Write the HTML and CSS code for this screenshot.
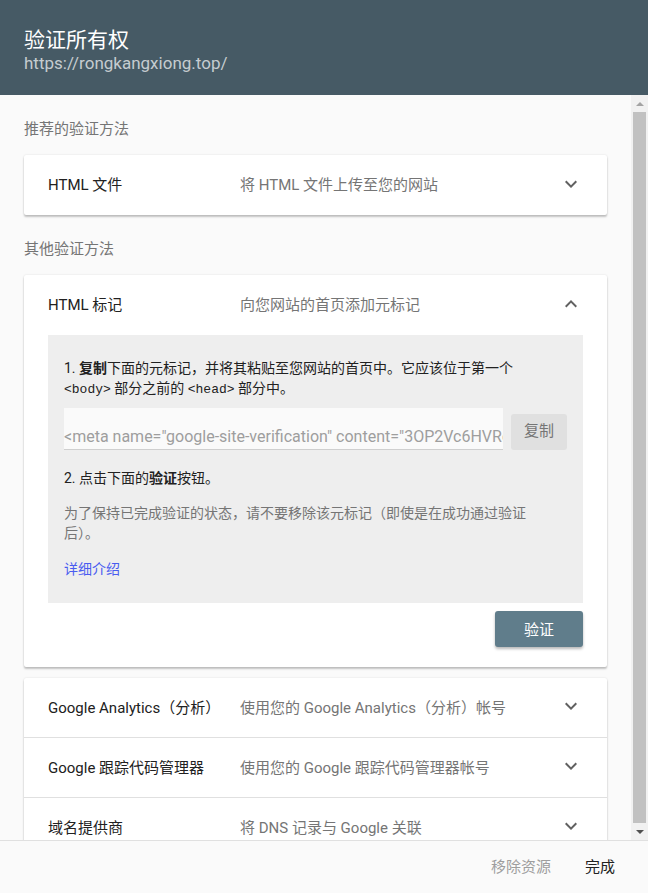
FILE: index.html
```html
<!DOCTYPE html>
<html lang="zh-CN">
<head>
<meta charset="utf-8">
<title>验证所有权</title>
<link rel="stylesheet" href="styles.css">
</head>
<body>
<div class="dialog">
  <header class="head">
    <h1 class="title">验证所有权</h1>
    <div class="url">https://rongkangxiong.top/</div>
  </header>
  <div class="body">
    <div class="scroll">
      <div class="section-label">推荐的验证方法</div>
      <div class="card">
        <div class="row">
          <div class="label">HTML 文件</div>
          <div class="desc">将 HTML 文件上传至您的网站</div>
          <svg class="chev" viewBox="0 0 24 24"><path d="M7.41 8.59L12 13.17l4.59-4.58L18 10l-6 6-6-6z"/></svg>
        </div>
      </div>
      <div class="section-label second">其他验证方法</div>
      <div class="card">
        <div class="row">
          <div class="label">HTML 标记</div>
          <div class="desc">向您网站的首页添加元标记</div>
          <svg class="chev" viewBox="0 0 24 24"><path d="M7.41 15.41L12 10.83l4.59 4.58L18 14l-6-6-6 6z"/></svg>
        </div>
        <div class="card-body">
          <div class="panel">
            <p class="step">1. <b>复制</b>下面的元标记，并将其粘贴至您网站的首页中。它应该位于第一个 <code>&lt;body&gt;</code> 部分之前的 <code>&lt;head&gt;</code> 部分中。</p>
            <div class="code-row">
              <div class="input">&lt;meta name="google-site-verification" content="3OP2Vc6HVRqWk2x8lZ0n" /&gt;</div>
              <div class="copy">复制</div>
            </div>
            <p class="step step2">2. 点击下面的<b>验证</b>按钮。</p>
            <p class="note">为了保持已完成验证的状态，请不要移除该元标记（即使是在成功通过验证后）。</p>
            <p class="link">详细介绍</p>
          </div>
          <div class="actions">
            <div class="verify">验证</div>
          </div>
        </div>
      </div>
      <div class="card card-list">
        <div class="row">
          <div class="label">Google Analytics（分析）</div>
          <div class="desc">使用您的 Google Analytics（分析）帐号</div>
          <svg class="chev" viewBox="0 0 24 24"><path d="M7.41 8.59L12 13.17l4.59-4.58L18 10l-6 6-6-6z"/></svg>
        </div>
        <div class="row">
          <div class="label">Google 跟踪代码管理器</div>
          <div class="desc">使用您的 Google 跟踪代码管理器帐号</div>
          <svg class="chev" viewBox="0 0 24 24"><path d="M7.41 8.59L12 13.17l4.59-4.58L18 10l-6 6-6-6z"/></svg>
        </div>
        <div class="row">
          <div class="label">域名提供商</div>
          <div class="desc">将 DNS 记录与 Google 关联</div>
          <svg class="chev" viewBox="0 0 24 24"><path d="M7.41 8.59L12 13.17l4.59-4.58L18 10l-6 6-6-6z"/></svg>
        </div>
      </div>
    </div>
    <div class="scrollbar">
      <div class="sb-btn"><span class="tri-up"></span></div>
      <div class="thumb"></div>
      <div class="sb-btn"><span class="tri-down"></span></div>
    </div>
  </div>
  <footer class="foot">
    <div class="fbtn disabled">移除资源</div>
    <div class="fbtn">完成</div>
  </footer>
</div>
</body>
</html>
```
FILE: styles.css
```css
html, body {
  margin: 0;
  padding: 0;
}
body {
  font-family: Roboto, "Noto Sans CJK SC", sans-serif;
  background: #fafafa;
}
.dialog {
  width: 648px;
  height: 893px;
  display: flex;
  flex-direction: column;
  overflow: hidden;
}
.head {
  flex: none;
  height: 95px;
  box-sizing: border-box;
  background: #465a65;
  padding: 28px 24px 0;
}
.title {
  margin: 0;
  font-size: 21px;
  line-height: 24px;
  font-weight: 400;
  color: #ffffff;
}
.url {
  font-size: 17px;
  line-height: 22px;
  color: #c5ccd0;
}
.body {
  flex: 1;
  display: flex;
  min-height: 0;
  background: #fafafa;
}
.scroll {
  flex: 1;
  overflow: hidden;
  padding: 24px 24px 0;
}
.section-label {
  font-size: 15px;
  line-height: 20px;
  color: #757575;
  margin-bottom: 16px;
}
.section-label.second {
  margin-top: 24px;
}
.card {
  background: #fff;
  border-radius: 2px;
  box-shadow: 0 2px 2px rgba(0,0,0,0.22), 0 0 2px rgba(0,0,0,0.12);
}
.card + .card {
  margin-top: 11px;
}
.row {
  display: flex;
  align-items: center;
  height: 60px;
  box-sizing: border-box;
  padding: 0 24px 3px;
  font-size: 15px;
}
.card-list .row {
  border-bottom: 1px solid #e0e0e0;
}
.label {
  flex: none;
  width: 192px;
  color: #212121;
  white-space: nowrap;
}
.desc {
  flex: 1;
  color: #757575;
  white-space: nowrap;
}
.chev {
  flex: none;
  width: 24px;
  height: 24px;
  fill: #616161;
}
.card-body {
  padding: 0 24px 20px;
}
.panel {
  background: #eeeeee;
  padding: 23px 16px 24px;
  font-size: 14px;
  line-height: 20px;
}
.panel p {
  margin: 0;
}
.step {
  color: #212121;
  max-width: 462px;
}
.step b {
  font-weight: 700;
}
code {
  font-family: "Liberation Mono", monospace;
  font-size: 13px;
  line-height: 1;
}
.code-row {
  display: flex;
  align-items: flex-end;
  margin-top: 10px;
}
.input {
  width: 439px;
  height: 42px;
  box-sizing: border-box;
  padding-top: 19px;
  background: #fafafa;
  border-bottom: 1px solid #cfcfcf;
  font-size: 16px;
  line-height: 20px;
  color: #9e9e9e;
  white-space: nowrap;
  overflow: hidden;
}
.copy {
  margin-left: 8px;
  width: 56px;
  height: 36px;
  box-sizing: border-box;
  padding-bottom: 2px;
  border-radius: 3px;
  background: #e0e0e0;
  color: #757575;
  font-size: 15px;
  display: flex;
  align-items: center;
  justify-content: center;
}
.step2 {
  margin-top: 18px !important;
}
.note {
  margin-top: 15px !important;
  color: #757575;
  max-width: 462px;
}
.link {
  margin-top: 16px !important;
  color: #4a5cf0;
}
.actions {
  display: flex;
  justify-content: flex-end;
  padding-top: 8px;
}
.verify {
  width: 88px;
  height: 36px;
  box-sizing: border-box;
  padding-bottom: 2px;
  border-radius: 3px;
  background: #607d8b;
  color: #fff;
  font-size: 15px;
  display: flex;
  align-items: center;
  justify-content: center;
  box-shadow: 0 2px 3px rgba(0,0,0,0.28);
}
.scrollbar {
  flex: none;
  width: 17px;
  background: #f1f1f1;
  display: flex;
  flex-direction: column;
}
.sb-btn {
  height: 17px;
  display: flex;
  align-items: center;
  justify-content: center;
}
.tri-up {
  width: 0;
  height: 0;
  border-left: 4px solid transparent;
  border-right: 4px solid transparent;
  border-bottom: 4px solid #a3a3a3;
}
.tri-down {
  width: 0;
  height: 0;
  border-left: 4px solid transparent;
  border-right: 4px solid transparent;
  border-top: 4px solid #505050;
}
.thumb {
  flex: 1;
  margin: 0 2px;
  background: #c1c1c1;
}
.foot {
  flex: none;
  height: 53px;
  box-sizing: border-box;
  border-top: 1px solid #e0e0e0;
  background: #fafafa;
  display: flex;
  align-items: center;
  justify-content: flex-end;
  gap: 34px;
  padding: 0 33px 3px 0;
  font-size: 15px;
}
.fbtn {
  color: #212121;
}
.fbtn.disabled {
  color: #9e9e9e;
}
```
